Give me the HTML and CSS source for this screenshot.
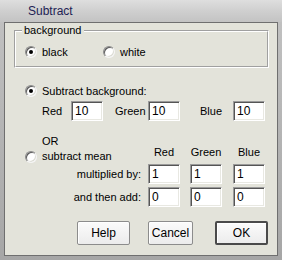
FILE: index.html
```html
<!DOCTYPE html>
<html>
<head>
<meta charset="utf-8">
<link rel="stylesheet" href="styles.css">
</head>
<body>
<div class="window">
  <div class="titlebar"><span class="title">Subtract</span></div>
  <div class="frame">
    <div class="dialog">
      <div class="group">
        <div class="group-in">
          <span class="legend">background</span>
          <div class="opts">
            <label class="opt"><span class="radio on"></span><span class="txt">black</span></label>
            <label class="opt"><span class="radio"></span><span class="txt">white</span></label>
          </div>
        </div>
      </div>

      <label class="opt sub-bg"><span class="radio on"></span><span class="txt">Subtract background:</span></label>

      <div class="rgb">
        <span class="lab l1">Red</span><span class="field">10</span>
        <span class="lab l2">Green</span><span class="field">10</span>
        <span class="lab l3">Blue</span><span class="field">10</span>
      </div>

      <div class="mean">
        <div class="mean-left">
          <span class="radio"></span>
          <span class="or-text">OR<br>subtract mean</span>
        </div>
        <div class="heads">
          <span class="head">Red</span>
          <span class="head c2">Green</span>
          <span class="head c3">Blue</span>
        </div>
      </div>

      <div class="frow">
        <span class="rlab">multiplied by:</span>
        <span class="field">1</span>
        <span class="field c2">1</span>
        <span class="field c3">1</span>
      </div>
      <div class="frow second">
        <span class="rlab">and then add:</span>
        <span class="field">0</span>
        <span class="field c2">0</span>
        <span class="field c3">0</span>
      </div>

      <div class="buttons">
        <span class="btn help">Help</span>
        <span class="btn cancel">Cancel</span>
        <span class="btn ok">OK</span>
      </div>
    </div>
  </div>
</div>
</body>
</html>
```

FILE: styles.css
```css
html, body {
  margin: 0;
  padding: 0;
}
body {
  width: 282px;
  height: 260px;
  overflow: hidden;
  font-family: "Liberation Sans", Arial, sans-serif;
  font-size: 11px;
  color: #000;
}
.window {
  width: 282px;
  height: 260px;
  display: flex;
  flex-direction: column;
  background: #aaaaaa;
}
.titlebar {
  height: 22px;
  line-height: 22px;
  background: linear-gradient(to bottom, #dedede 0%, #cfcfcf 50%, #c3c3c3 100%);
  padding-left: 28px;
}
.title {
  font-size: 12px;
  color: #1e2254;
}
.frame {
  flex: 1;
  padding: 0 4px 4px 4px;
  display: flex;
  background: linear-gradient(to bottom, #c0c0c0, #a6a6a6);
}
.dialog {
  flex: 1;
  border: 1px solid #6f6f6f;
  background: #e3e3da;
}

/* group box */
.group {
  position: relative;
  margin: 7px 0 0 9px;
  width: 255px;
  height: 38px;
  box-sizing: border-box;
  border: 1px solid;
  border-color: #a0a0a0 #ffffff #ffffff #a0a0a0;
}
.group-in {
  height: 100%;
  box-sizing: border-box;
  border: 1px solid;
  border-color: #ffffff #a0a0a0 #a0a0a0 #ffffff;
  padding: 14px 0 0 9px;
}
.legend {
  position: absolute;
  top: -7px;
  left: 7px;
  padding: 0 2px;
  line-height: 13px;
  background: #e3e3da;
}
.opts {
  display: flex;
}
.opt {
  display: flex;
  align-items: center;
  height: 12px;
  width: 78px;
}
.txt {
  margin-left: 5px;
  line-height: 13px;
  white-space: nowrap;
}

/* radio */
.radio {
  position: relative;
  flex: none;
  width: 12px;
  height: 12px;
  box-sizing: border-box;
  border-radius: 50%;
  border: 1px solid;
  border-color: #8a8a8a #f4f4f4 #f4f4f4 #8a8a8a;
  background: #fff;
  box-shadow: inset 1px 1px 0 #5a5a5a, inset -1px -1px 0 #dcdcd4;
}
.radio.on::after {
  content: "";
  position: absolute;
  left: 3px;
  top: 3px;
  width: 4px;
  height: 4px;
  border-radius: 50%;
  background: #000;
}

.sub-bg {
  margin: 17px 0 0 20px;
  width: auto;
}

/* red green blue row */
.rgb {
  display: flex;
  align-items: center;
  margin: 4px 0 0 37px;
  height: 20px;
}
.lab {
  line-height: 13px;
}
.l1 { width: 29px; }
.l2 { width: 33px; margin-left: 12px; }
.l3 { width: 33px; margin-left: 20px; }

.field {
  flex: none;
  width: 32px;
  height: 20px;
  box-sizing: border-box;
  background: #fff;
  border: 1px solid;
  border-color: #9a9a9a #ffffff #ffffff #9a9a9a;
  box-shadow: inset 1px 1px 0 #555555, inset -1px -1px 0 #e8e8e2;
  font-size: 12px;
  line-height: 18px;
  padding-left: 3px;
}

/* mean */
.mean {
  display: flex;
  margin: 13px 0 0 20px;
  height: 30px;
}
.mean-left {
  display: flex;
  align-items: flex-end;
  width: 123px;
}
.mean-left .radio {
  margin-bottom: 1px;
}
.or-text {
  margin-left: 5px;
  line-height: 15px;
}
.heads {
  display: flex;
  align-items: flex-end;
  padding-bottom: 4px;
}
.head {
  width: 32px;
  text-align: center;
  line-height: 15px;
}
.head.c2, .field.c2 { margin-left: 10px; }
.head.c3, .field.c3 { margin-left: 11px; }

.frow {
  display: flex;
  align-items: center;
  margin-left: 20px;
  height: 20px;
}
.frow.second {
  margin-top: 3px;
}
.rlab {
  width: 116px;
  margin-right: 7px;
  text-align: right;
  line-height: 13px;
}

/* buttons */
.buttons {
  display: flex;
  margin: 14px 0 0 72px;
}
.btn {
  height: 24px;
  box-sizing: border-box;
  border: 1px solid #8c8c8c;
  border-radius: 2px;
  background: linear-gradient(to bottom, #fbfbfb, #ececec);
  box-shadow: inset 1px 1px 0 #ffffff;
  display: flex;
  align-items: center;
  justify-content: center;
  font-size: 12px;
}
.help { width: 53px; }
.cancel { width: 45px; margin-left: 18px; }
.ok {
  width: 53px;
  margin-left: 22px;
  border: 2px solid #4a4a4a;
  border-radius: 2px;
}
```
